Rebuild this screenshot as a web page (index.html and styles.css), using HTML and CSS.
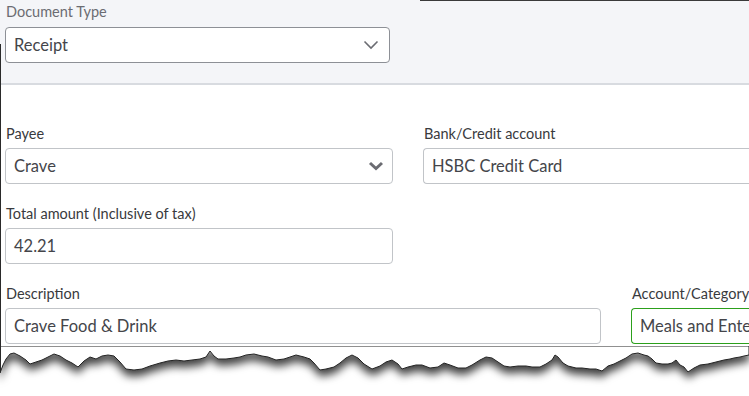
FILE: index.html
```html
<!DOCTYPE html>
<html lang="en">
<head>
    <meta charset="UTF-8">
    <meta name="viewport" content="width=device-width, initial-scale=1.0">
    <title>Receipt</title>
    <link rel="stylesheet" href="styles.css">
</head>
<body>
    <div class="sheet">
        <div class="doc-type">
            <div class="label light">Document Type</div>
            <div class="select dark-border">
                <span>Receipt</span>
                <svg class="chev" width="16" height="10" viewBox="0 0 16 10"><path d="M1.5 1.5 L8 8 L14.5 1.5" fill="none" stroke="#6b6c72" stroke-width="1.6"/></svg>
            </div>
        </div>

        <div class="form">
            <div class="row">
                <div class="field w-388">
                    <div class="label">Payee</div>
                    <div class="select">
                        <span>Crave</span>
                        <svg class="chev bold" width="16" height="10" viewBox="0 0 16 10"><path d="M2 2 L8 7.5 L14 2" fill="none" stroke="#6b6c72" stroke-width="3"/></svg>
                    </div>
                </div>
                <div class="field grow">
                    <div class="label">Bank/Credit account</div>
                    <div class="select open-right"><span>HSBC Credit Card</span></div>
                </div>
            </div>
            <div class="row">
                <div class="field w-388">
                    <div class="label">Total amount (Inclusive of tax)</div>
                    <div class="select"><span>42.21</span></div>
                </div>
            </div>
            <div class="row">
                <div class="field w-596">
                    <div class="label">Description</div>
                    <div class="select"><span>Crave Food &amp; Drink</span></div>
                </div>
                <div class="field grow">
                    <div class="label">Account/Category</div>
                    <div class="select focus open-right"><span>Meals and Ente</span></div>
                </div>
            </div>
        </div>

        <!-- torn paper edge -->
        <svg class="tear" width="749" height="52" viewBox="0 0 749 52">
            <defs>
                <filter id="shade" x="-5%" y="-50%" width="110%" height="250%">
                    <feDropShadow dx="0" dy="6" stdDeviation="4" flood-color="#000" flood-opacity="0.75"/>
                </filter>
            </defs>
            <path filter="url(#shade)" fill="#fff" stroke="#222" stroke-width="1"
                d="M0 0 L749 0 L749 9 L744 10 L740 11 L734 12 L730 13 L724 14 L716 16 L708 18 L700 19 L694 22 L688 26 L684 21 L680 19 L676 14 L672 17 L668 18 L662 18 L656 17 L652 13 L648 10 L644 9 L638 7 L632 8 L626 12 L620 15 L614 18 L608 20 L602 25 L596 23 L590 23 L582 22 L576 22 L568 20 L563 17 L558 11 L555 9 L552 14 L546 18 L540 21 L532 21 L526 20 L518 20 L510 21 L504 20 L498 16 L492 12 L486 11 L480 14 L472 19 L466 22 L458 22 L450 19 L444 17 L438 21 L430 22 L422 19 L416 19 L408 21 L402 23 L398 18 L392 14 L386 16 L380 20 L372 23 L364 18 L358 12 L352 9 L346 12 L340 17 L334 21 L326 23 L320 24 L314 17 L310 13 L304 11 L296 9 L290 11 L284 13 L276 14 L268 11 L262 10 L254 8 L246 9 L240 11 L234 12 L226 13 L218 13 L214 10 L210 5 L206 11 L200 13 L192 14 L184 15 L176 14 L168 15 L160 17 L150 20 L142 23 L134 24 L126 23 L120 16 L114 10 L108 9 L102 10 L96 13 L90 11 L84 15 L78 21 L72 17 L66 14 L60 10 L54 8 L48 11 L42 14 L36 16 L30 18 L26 14 L20 10 L14 7 L10 8 L6 13 L3 19 L0 27 Z"/>
        </svg>
    </div>
</body>
</html>
```

FILE: styles.css
```css
html, body {
    margin: 0;
    background: #fff;
    overflow: hidden;
}
body {
    font-family: Lato, "Noto Sans", Arial, sans-serif;
    color: #393a3d;
    width: 749px;
    height: 396px;
}
.sheet {
    position: relative;
}
/* dark window edges of the screenshot */
.sheet::before {
    content: "";
    position: absolute;
    left: 0;
    top: 44px;
    width: 1px;
    height: 328px;
    background: #2a2a2a;
}
.sheet::after {
    content: "";
    position: absolute;
    left: 420px;
    top: 0;
    right: 0;
    height: 1px;
    background: #3a3a3a;
}
.doc-type {
    background: #f4f5f8;
    padding: 2px 0 20px 5px;
    border-bottom: 2px solid #d8dbe0;
    height: 61px;
}
.label {
    font-size: 14.5px;
    line-height: 20px;
    margin-left: 1px;
    margin-bottom: 4px;
    color: #393a3d;
}
.label.light {
    color: #6b6c72;
    margin-bottom: 5px;
}
.select {
    height: 34px;
    border: 1px solid #c1c4c8;
    border-radius: 4px;
    background: #fff;
    display: flex;
    align-items: center;
    justify-content: space-between;
    padding: 0 8px 0 8px;
    font-size: 16.5px;
    color: #44454a;
    box-sizing: content-box;
}
.doc-type .select {
    width: 365px;
    padding-right: 10px;
}
.dark-border {
    border-color: #8d9096;
}
.select.focus {
    border-color: #2ca01c;
}
.select.open-right {
    border-right: none;
    border-radius: 4px 0 0 4px;
    white-space: nowrap;
    overflow: hidden;
}
.form {
    padding: 39px 0 0 5px;
}
.row {
    display: flex;
    gap: 30px;
    margin-bottom: 20px;
}
.row:last-child {
    margin-bottom: 0;
}
.field.w-388 {
    width: 388px;
    flex: none;
}
.field.w-596 {
    width: 596px;
    flex: none;
}
.field.grow {
    flex: 1;
    min-width: 0;
}
.w-388 .select {
    width: 370px;
}
.w-596 .select {
    width: 578px;
}
.tear {
    display: block;
    margin-top: 2px;
}
```
